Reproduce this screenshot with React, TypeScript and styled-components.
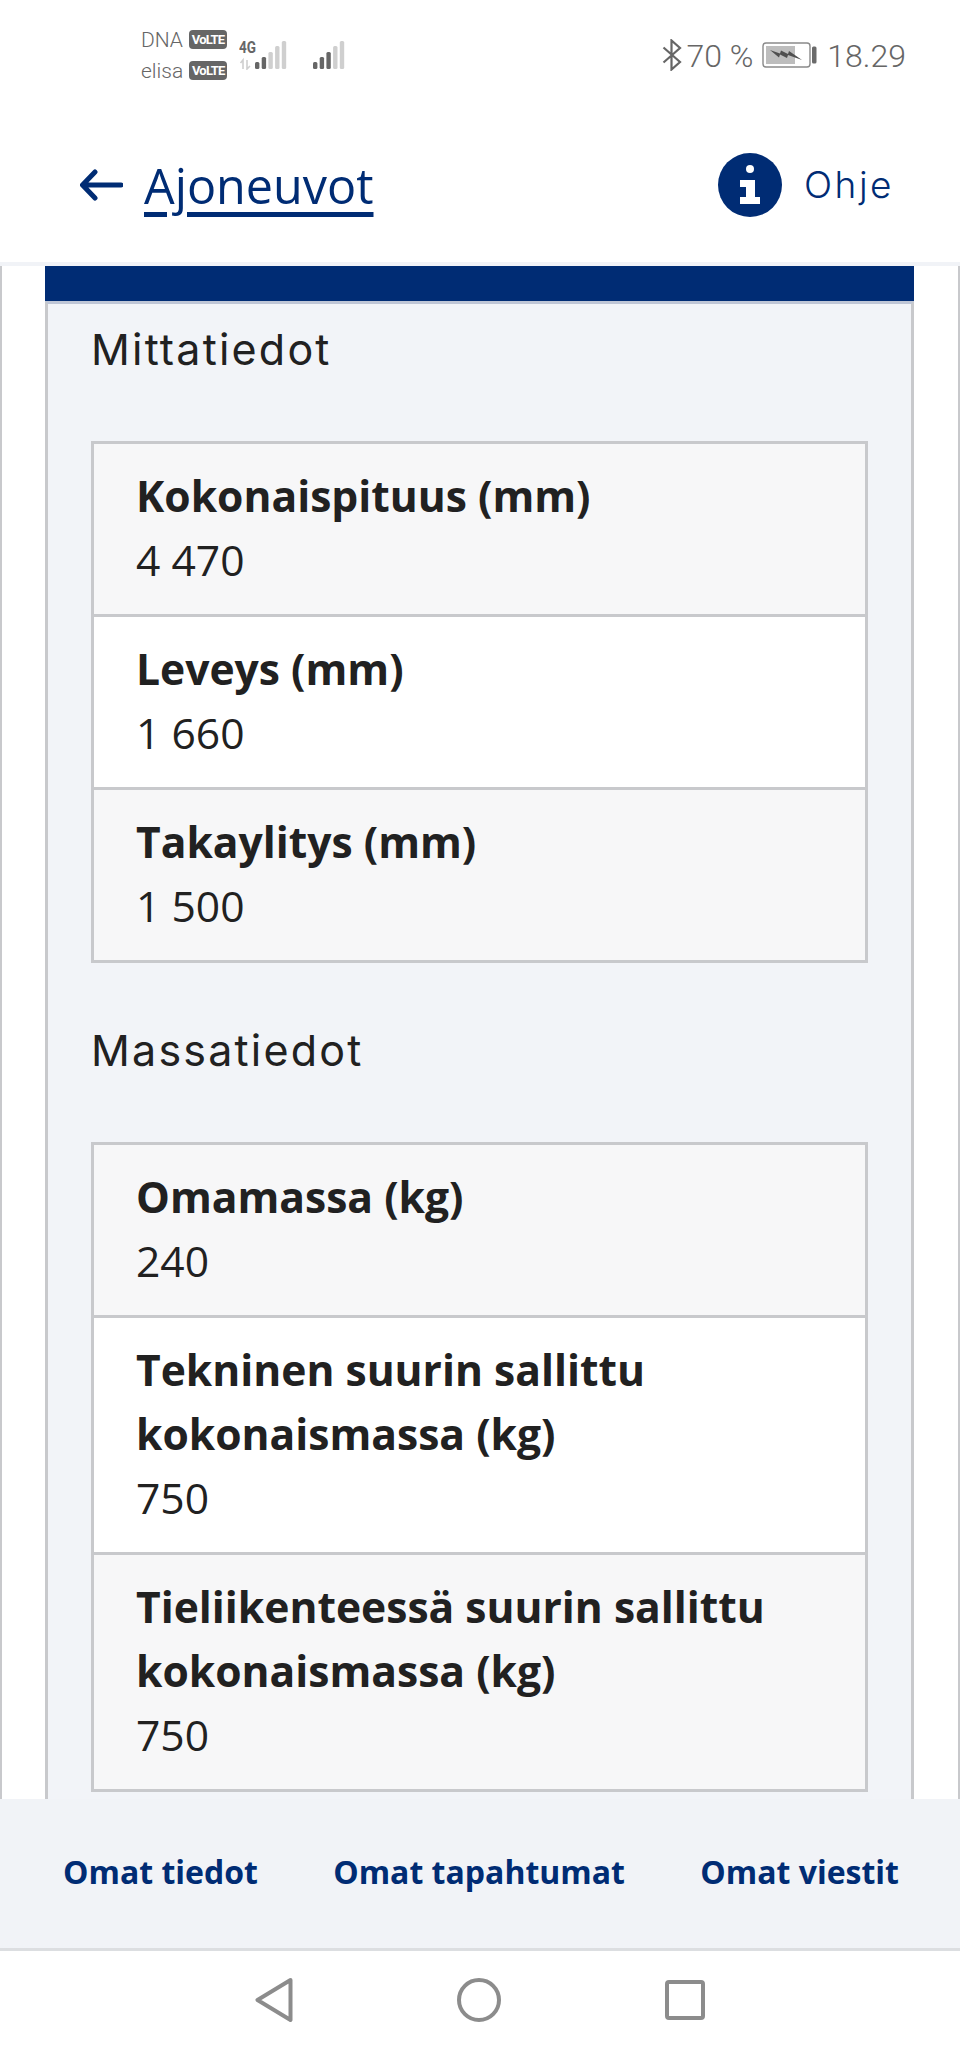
import React from 'react';
import styled, { createGlobalStyle } from 'styled-components';

const NAVY = '#002c74';
const LINE = '#c8c9cc';

const GlobalStyle = createGlobalStyle`
  html, body {
    margin: 0;
    padding: 0;
    background: #ffffff;
  }
  * {
    box-sizing: border-box;
  }
`;

const Screen = styled.div`
  width: 960px;
  height: 2053px;
  display: flex;
  flex-direction: column;
  overflow: hidden;
  font-family: 'Open Sans', sans-serif;
  color: #212121;
`;

const StatusBar = styled.div`
  height: 110px;
  flex: none;
  display: flex;
  align-items: center;
  justify-content: space-between;
  padding: 0 54px 0 141px;
  font-family: Roboto, sans-serif;
  color: #666666;
`;

const StatusGroup = styled.div`
  display: flex;
  align-items: center;
`;

const Carriers = styled.div`
  display: flex;
  flex-direction: column;
`;

const Carrier = styled.div`
  height: 31px;
  display: flex;
  align-items: center;
  gap: 6px;
  font-size: 21px;
  font-weight: 300;
`;

const VolteBadge = styled.span`
  width: 38px;
  height: 19px;
  display: flex;
  align-items: center;
  justify-content: center;
  border-radius: 4px;
  background: #666666;
  color: #ffffff;
  font-size: 13px;
  font-weight: 700;
  letter-spacing: -0.8px;
`;

const NetworkIcon = styled.svg`
  display: block;
  margin-left: 12px;
`;

const SecondSignal = styled.svg`
  display: block;
  margin-left: 26px;
`;

const StatusText = styled.span`
  font-size: 32px;
  font-weight: 300;
  line-height: 40px;
  white-space: nowrap;
  position: relative;
  top: 1px;
`;

const BluetoothIcon = styled.svg`
  display: block;
  margin-right: 4px;
`;

const BatteryIcon = styled.svg`
  display: block;
  margin: 0 10px 0 9px;
`;

const Header = styled.header`
  height: 156px;
  flex: none;
  display: flex;
  align-items: center;
  justify-content: space-between;
  padding: 0 66px 3px 80px;
  border-bottom: 4px solid #f1f3f7;
`;

const BackLink = styled.a`
  display: flex;
  align-items: center;
  gap: 21px;
  color: ${NAVY};
`;

const BackText = styled.span`
  font-family: 'Open Sans', sans-serif;
  font-size: 48.5px;
  line-height: 60px;
  text-decoration: underline;
  text-decoration-thickness: 5px;
  text-underline-offset: 8px;
  text-decoration-skip-ink: auto;
`;

const HelpLink = styled.a`
  display: flex;
  align-items: center;
  gap: 22px;
  color: ${NAVY};
  font-family: Inter, sans-serif;
  font-size: 37px;
  font-weight: 300;
  letter-spacing: 2.5px;
`;

const Main = styled.main`
  flex: 1;
  min-height: 0;
  overflow: hidden;
  padding: 0 44px 0 43px;
  border-left: 2px solid ${LINE};
  border-right: 2px solid ${LINE};
`;

const TopBar = styled.div`
  height: 35px;
  background: ${NAVY};
`;

const Panel = styled.section`
  padding: 0 43px 60px 43px;
  background: #f2f4f8;
  border: 3px solid ${LINE};
  border-top: 3px solid #bfc6d6;
  border-bottom: none;
`;

const Heading = styled.h2`
  height: 91px;
  margin: 42px 0 46px;
  font-family: Inter, sans-serif;
  font-size: 43px;
  font-weight: 400;
  letter-spacing: 2.2px;
  line-height: 90px;
  color: #212121;

  &:first-child {
    margin-top: 0;
  }
`;

const Table = styled.div`
  border: 3px solid ${LINE};
`;

const Row = styled.div`
  padding: 18.5px 42px 23.5px;
  background: #f7f7f8;
  font-size: 42.6px;
  line-height: 64px;

  &:nth-child(even) {
    background: #ffffff;
  }

  & + & {
    border-top: 3px solid ${LINE};
  }
`;

const Label = styled.div`
  font-weight: 700;
`;

const Value = styled.div`
  font-weight: 400;
`;

const BottomNav = styled.nav`
  height: 152px;
  flex: none;
  display: flex;
  align-items: center;
  justify-content: space-between;
  padding: 0 61px 4px 63px;
  background: #f1f3f7;
  border-bottom: 3px solid #dcdee1;
`;

const NavLink = styled.a`
  color: ${NAVY};
  font-size: 32px;
  font-weight: 700;
`;

const SystemBar = styled.div`
  flex: none;
  height: 102px;
  display: flex;
  align-items: center;
  justify-content: center;
  gap: 164px;
  padding-bottom: 4px;
`;

const measurements = [
  { label: 'Kokonaispituus (mm)', value: '4 470' },
  { label: 'Leveys (mm)', value: '1 660' },
  { label: 'Takaylitys (mm)', value: '1 500' },
];

const masses = [
  { label: 'Omamassa (kg)', value: '240' },
  { label: 'Tekninen suurin sallittu kokonaismassa (kg)', value: '750' },
  { label: 'Tieliikenteessä suurin sallittu kokonaismassa (kg)', value: '750' },
];

const SignalBars = ({ x, dark }: { x: number; dark: number }) => {
  const heights = [7, 12, 17, 23, 28];
  return (
    <>
      {heights.map((h, i) => (
        <rect
          key={i}
          x={x + i * 6.7}
          y={29 - h}
          width={4.4}
          height={h}
          rx={1.5}
          fill={i < dark ? '#666666' : '#cfcfcf'}
        />
      ))}
    </>
  );
};

const DataTable = ({ rows }: { rows: { label: string; value: string }[] }) => (
  <Table>
    {rows.map((row) => (
      <Row key={row.label}>
        <Label>{row.label}</Label>
        <Value>{row.value}</Value>
      </Row>
    ))}
  </Table>
);

const App = (): React.ReactElement => {
  return (
    <Screen>
      <GlobalStyle />
      <StatusBar>
        <StatusGroup>
          <Carriers>
            <Carrier>
              DNA
              <VolteBadge>VoLTE</VolteBadge>
            </Carrier>
            <Carrier>
              elisa
              <VolteBadge>VoLTE</VolteBadge>
            </Carrier>
          </Carriers>
          <NetworkIcon width='48' height='30' viewBox='0 0 48 30'>
            <text
              x='0'
              y='13'
              fontFamily='Roboto, sans-serif'
              fontWeight='700'
              fontSize='17'
              textLength='17'
              lengthAdjust='spacingAndGlyphs'
              fill='#666666'
            >
              4G
            </text>
            <path
              d='M4 29v-9l-2.500 3M8 20v9l3-3'
              fill='none'
              stroke='#cfcfcf'
              strokeWidth='1.600'
            />
            <SignalBars x={16} dark={2} />
          </NetworkIcon>
          <SecondSignal width='32' height='30' viewBox='0 0 32 30'>
            <SignalBars x={0} dark={3} />
          </SecondSignal>
        </StatusGroup>
        <StatusGroup>
          <BluetoothIcon width='20' height='32' viewBox='0 0 20 32'>
            <path
              d='M1.500 8.500 18 23l-8.500 7.500V1.500L18 9 1.500 23.500'
              fill='none'
              stroke='#666666'
              strokeWidth='2.200'
            />
          </BluetoothIcon>
          <StatusText>70 %</StatusText>
          <BatteryIcon width='55' height='26' viewBox='0 0 55 26'>
            <rect x='1' y='1' width='47' height='24' rx='3' fill='none' stroke='#8a8a8a' strokeWidth='1.400' />
            <rect x='4' y='4' width='29' height='18' fill='#bdbdbd' />
            <rect x='50' y='4.500' width='4.500' height='17' rx='1.500' fill='#6a6a6a' />
            <path
              d='M8 8l10 3.500 1-3 7 3.500 1-3 13 9-14-5-1 3-7-3.500-1 3z'
              fill='#4f4f4f'
            />
          </BatteryIcon>
          <StatusText>18.29</StatusText>
        </StatusGroup>
      </StatusBar>

      <Header>
        <BackLink>
          <svg width='43' height='32' viewBox='0 0 43 32'>
            <path
              d='M41 16H3M15 3 2.500 16 15 29'
              fill='none'
              stroke={NAVY}
              strokeWidth='5'
              strokeLinecap='round'
              strokeLinejoin='round'
            />
          </svg>
          <BackText>Ajoneuvot</BackText>
        </BackLink>
        <HelpLink>
          <svg width='64' height='64' viewBox='0 0 64 64'>
            <circle cx='32' cy='32' r='32' fill={NAVY} />
            <circle cx='32' cy='16' r='4' fill='#ffffff' />
            <path d='M22 27h15v17h5v7H22v-7h6v-10h-6z' fill='#ffffff' />
          </svg>
          Ohje
        </HelpLink>
      </Header>

      <Main>
        <TopBar />
        <Panel>
          <Heading>Mittatiedot</Heading>
          <DataTable rows={measurements} />
          <Heading>Massatiedot</Heading>
          <DataTable rows={masses} />
        </Panel>
      </Main>

      <BottomNav>
        <NavLink>Omat tiedot</NavLink>
        <NavLink>Omat tapahtumat</NavLink>
        <NavLink>Omat viestit</NavLink>
      </BottomNav>

      <SystemBar>
        <svg width='38' height='44' viewBox='0 0 38 44'>
          <path
            d='M35.500 2 2.500 22 35.500 42z'
            fill='none'
            stroke='#8c8c8c'
            strokeWidth='4'
            strokeLinejoin='round'
          />
        </svg>
        <svg width='44' height='44' viewBox='0 0 44 44'>
          <circle cx='22' cy='22' r='20' fill='none' stroke='#8c8c8c' strokeWidth='4' />
        </svg>
        <svg width='40' height='40' viewBox='0 0 40 40'>
          <rect x='2' y='2' width='36' height='36' rx='2' fill='none' stroke='#8c8c8c' strokeWidth='4' />
        </svg>
      </SystemBar>
    </Screen>
  );
};

export default App;
